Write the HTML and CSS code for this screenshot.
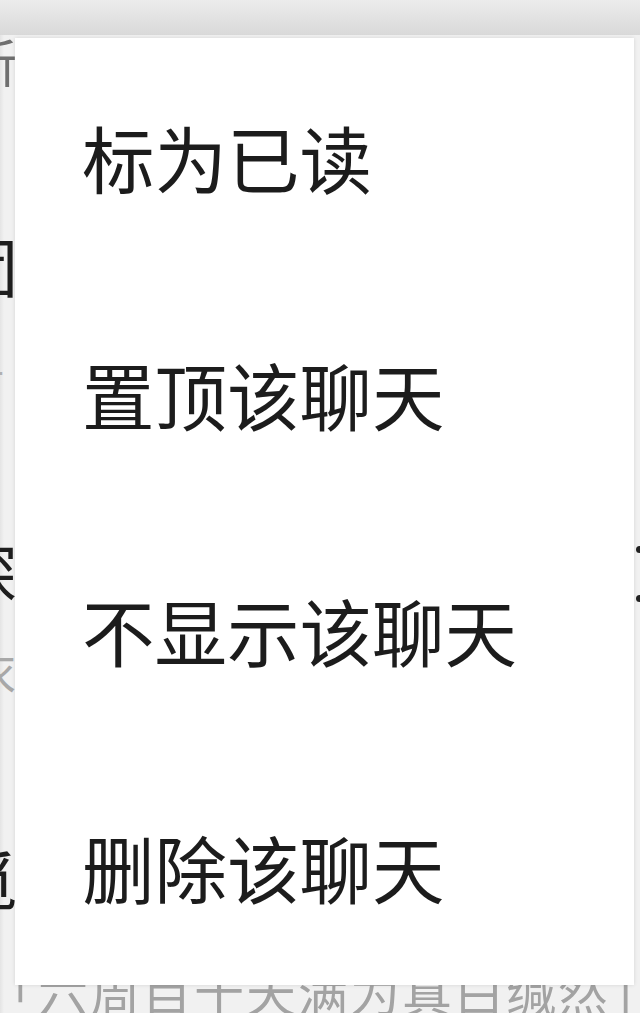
FILE: index.html
```html
<!DOCTYPE html>
<html lang="zh-CN">
<head>
<meta charset="utf-8">
<title>聊天菜单</title>
<link rel="stylesheet" href="styles.css">
</head>
<body>
<div class="screen">
  <div class="bg">
    <div class="header"></div>
    <div class="frag f1 gray">新的朋友消息</div>
    <div class="frag f2 name">团</div>
    <div class="frag f3 gray">子</div>
    <div class="row r4">
      <div class="frag name">深</div>
      <div class="dots"><i></i><i></i></div>
    </div>
    <div class="frag f5 gray">衣</div>
    <div class="frag f6 name">觅</div>
    <div class="frag f7 light">「六周目十天满为真白缄然」</div>
  </div>
  <ul class="menu">
    <li class="item">标为已读</li>
    <li class="item">置顶该聊天</li>
    <li class="item">不显示该聊天</li>
    <li class="item">删除该聊天</li>
  </ul>
</div>
</body>
</html>
```

FILE: styles.css
```css
html, body {
  margin: 0;
  padding: 0;
  background: #ececec;
}
.screen {
  position: relative;
  width: 640px;
  height: 1013px;
  overflow: hidden;
  font-family: "Noto Sans CJK SC", "Noto Sans", sans-serif;
  background: linear-gradient(to right, #e4e4e4 0, #f1f1f1 4px, #f1f1f1 100%);
}
.bg {
  display: flex;
  flex-direction: column;
}
.header {
  height: 35px;
  background: linear-gradient(to bottom, #ececec, #d9d9d9);
  flex: none;
}
.frag {
  line-height: 1;
  white-space: nowrap;
  flex: none;
}
.name {
  color: #1e1e1e;
  font-size: 64px;
  margin-left: -46px;
}
.gray {
  color: #6f6f6f;
}
.light {
  color: #a3a3a3;
}
.f1 {
  font-size: 52px;
  margin-left: -35px;
  height: 52px;
}
.f2 {
  margin-top: 145px;
  height: 64px;
}
.f3 {
  font-size: 40px;
  margin-top: 55px;
  margin-left: -36px;
  color: #b0b0b0;
  height: 40px;
}
.row {
  display: flex;
  justify-content: space-between;
  align-items: flex-start;
  flex: none;
}
.r4 {
  margin-top: 147px;
  height: 64px;
}
.dots {
  display: flex;
  flex-direction: column;
  gap: 42px;
  padding-top: 8px;
  margin-right: -3px;
}
.dots i {
  display: block;
  width: 7px;
  height: 7px;
  border-radius: 50%;
  background: #222;
}
.f5 {
  font-size: 46px;
  margin-top: 44px;
  margin-left: -30px;
  color: #a8a8a8;
  height: 46px;
}
.f6 {
  margin-top: 153px;
  height: 64px;
}
.f7 {
  font-size: 50px;
  margin-top: 56px;
  margin-left: -14px;
  letter-spacing: 2px;
}
.menu {
  position: absolute;
  left: 15px;
  top: 38px;
  width: 619px;
  height: 947px;
  margin: 0;
  padding: 0;
  list-style: none;
  background: #ffffff;
  box-shadow: 0 0 4px rgba(0, 0, 0, 0.12);
  display: flex;
  flex-direction: column;
}
.item {
  flex: 1;
  display: flex;
  align-items: center;
  padding-left: 67px;
  padding-top: 0;
  font-size: 72.5px;
  color: #1c1c1c;
  white-space: nowrap;
}
```
